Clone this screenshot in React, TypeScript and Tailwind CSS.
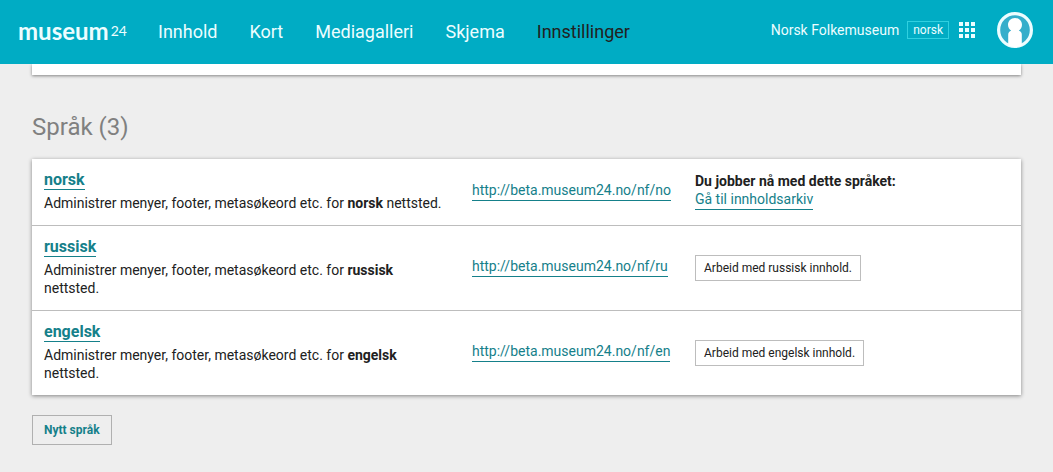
const navItems = [
  { label: "Innhold", active: false },
  { label: "Kort", active: false },
  { label: "Mediagalleri", active: false },
  { label: "Skjema", active: false },
  { label: "Innstillinger", active: true },
];

const languages = [
  { name: "norsk", code: "no", current: true },
  { name: "russisk", code: "ru", current: false },
  { name: "engelsk", code: "en", current: false },
];

const linkClass = "inline-block border-b border-[#15808a] text-[#15808a]";

function AppsIcon() {
  return (
    <svg viewBox="0 0 16 16" className="size-4" fill="#ecfdff" aria-hidden="true">
      {[0, 6, 12].map((y) =>
        [0, 6, 12].map((x) => <rect key={`${x}-${y}`} x={x} y={y} width="4" height="4" />),
      )}
    </svg>
  );
}

function AvatarIcon() {
  return (
    <svg viewBox="0 0 36 36" className="size-9" aria-hidden="true">
      <circle cx="18" cy="18" r="16.4" fill="#35aecb" stroke="#ecfdff" strokeWidth="3.2" />
      <path
        d="M18 6c-4.200 0-7 3-7 6.800 0 2.500 1.300 4.700 3.200 5.900-2 .6-3 1.900-3 4.100v10.800c2.100.9 4.400 1.400 6.800 1.400s4.700-.5 6.800-1.400V22.800c0-2.200-1-3.500-3-4.100 1.900-1.200 3.200-3.400 3.200-5.900C25 9 22.200 6 18 6z"
        fill="#fff"
      />
    </svg>
  );
}

function Header() {
  return (
    <header className="flex h-16 items-center justify-between bg-[#00acc4] pr-5 pl-[18px] text-[#ecfdff]">
      <div className="flex items-center">
        <a href="#" className="flex w-[140px] items-start pb-0.5 font-['Lato',sans-serif]">
          <span className="text-2xl leading-8 font-bold">museum</span>
          <span className="pt-1 pl-0.5 text-sm leading-6 font-normal">24</span>
        </a>
        <nav className="flex gap-8 text-lg">
          {navItems.map((item) => (
            <a
              key={item.label}
              href="#"
              aria-current={item.active ? "page" : undefined}
              className={item.active ? "text-[#212121]" : "text-[#ecfdff]"}
            >
              {item.label}
            </a>
          ))}
        </nav>
      </div>
      <div className="flex items-center pb-1">
        <span className="text-sm">Norsk Folkemuseum</span>
        <a
          href="#"
          className="ml-2 border border-[#2fd0e0] px-[5px] text-xs leading-4"
        >
          norsk
        </a>
        <button type="button" aria-label="Apper" className="ml-[10px]">
          <AppsIcon />
        </button>
        <button type="button" aria-label="Profil" className="ml-[22px]">
          <AvatarIcon />
        </button>
      </div>
    </header>
  );
}

export default function App() {
  return (
    <div className="min-h-screen bg-[#eeeeee] font-['Roboto',sans-serif] text-[#212121]">
      <Header />
      <main className="pr-8 pb-7 pl-8">
        <div className="h-[11px] bg-white shadow-[0_1px_3px_rgba(0,0,0,0.45)] [clip-path:inset(0_-6px_-6px_-6px)]" />
        <h1 className="mt-9 text-2xl leading-8 font-normal text-[#808080]">Språk (3)</h1>
        <table className="mt-4 w-full table-fixed border-separate border-spacing-0 bg-white text-left text-sm leading-[18px] shadow-[0_1px_4px_rgba(0,0,0,0.45)]">
          <colgroup>
            <col className="w-[428px]" />
            <col className="w-[223px]" />
            <col />
          </colgroup>
          <tbody className="[&>tr:not(:last-child)>td]:border-b [&>tr>td]:border-[#bdbdbd]">
            {languages.map((lang) => (
              <tr key={lang.code}>
                <td className="px-3 pt-3 pb-[13px]">
                  <h2 className="mb-1 flex text-base leading-[18px] font-bold">
                    <a href="#" className={linkClass}>
                      {lang.name}
                    </a>
                  </h2>
                  <p>
                    Administrer menyer, footer, metasøkeord etc. for <b>{lang.name}</b> nettsted.
                  </p>
                </td>
                <td className="px-3 pb-[3px] align-middle">
                  <a href="#" className={`${linkClass} pb-px`}>
                    http://beta.museum24.no/nf/{lang.code}
                  </a>
                </td>
                <td className="px-3 align-middle">
                  {lang.current ? (
                    <div className="flex flex-col items-start pb-[3px]">
                      <b>Du jobber nå med dette språket:</b>
                      <a href="#" className={`${linkClass} pb-px`}>
                        Gå til innholdsarkiv
                      </a>
                    </div>
                  ) : (
                    <button
                      type="button"
                      className="block border border-[#bdbdbd] bg-white px-2 text-xs leading-6"
                    >
                      Arbeid med {lang.name} innhold.
                    </button>
                  )}
                </td>
              </tr>
            ))}
          </tbody>
        </table>
        <button
          type="button"
          className="mt-5 block border border-[#b0b0b0] px-[11px] text-xs leading-7 font-bold text-[#15808a]"
        >
          Nytt språk
        </button>
      </main>
    </div>
  );
}
